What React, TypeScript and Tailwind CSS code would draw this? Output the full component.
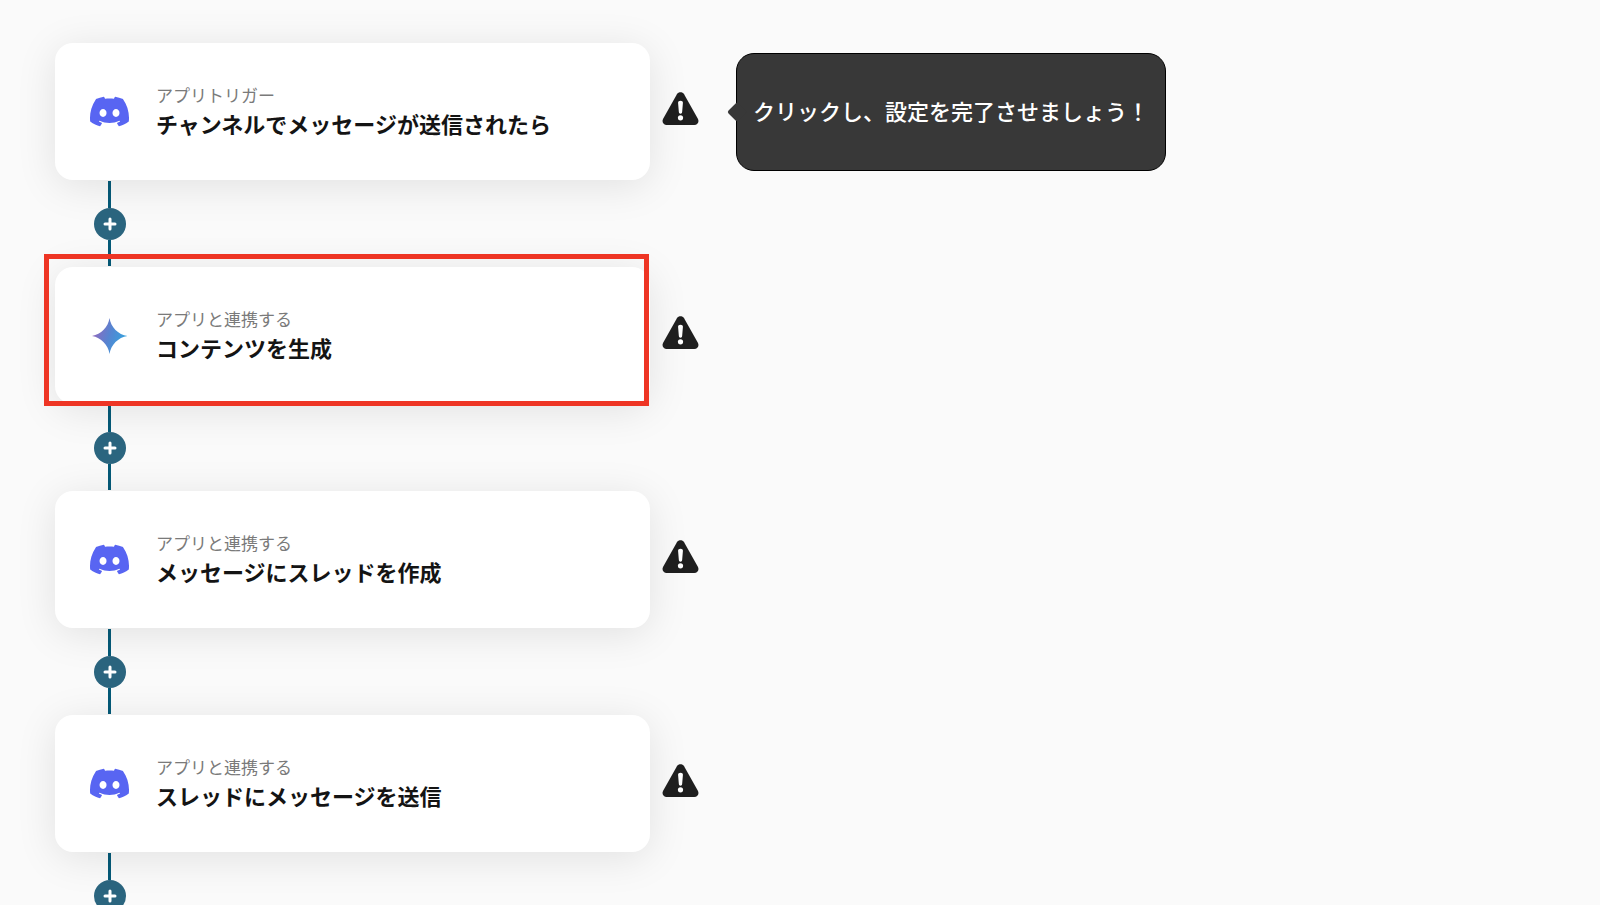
import { Fragment } from "react";
import { SiDiscord } from "react-icons/si";

type Step = {
  app: "discord" | "gemini";
  label: string;
  title: string;
  hint?: string;
  highlighted?: boolean;
};

const steps: Step[] = [
  {
    app: "discord",
    label: "アプリトリガー",
    title: "チャンネルでメッセージが送信されたら",
    hint: "クリックし、設定を完了させましょう！",
  },
  {
    app: "gemini",
    label: "アプリと連携する",
    title: "コンテンツを生成",
    highlighted: true,
  },
  {
    app: "discord",
    label: "アプリと連携する",
    title: "メッセージにスレッドを作成",
  },
  {
    app: "discord",
    label: "アプリと連携する",
    title: "スレッドにメッセージを送信",
  },
];

function GeminiIcon() {
  return (
    <svg viewBox="0 0 36 36" className="size-9" aria-hidden="true">
      <defs>
        <linearGradient id="gemini" x1="0" y1="0.3" x2="1" y2="0.6">
          <stop offset="0.1" stopColor="#8c6cc0" />
          <stop offset="0.5" stopColor="#5684d1" />
          <stop offset="0.9" stopColor="#3a9fdc" />
        </linearGradient>
      </defs>
      <path
        d="M17.5 0C18.8 9.2 26.2 16.6 35.5 18C26.2 19.4 18.8 26.8 17.5 36C16.2 26.8 8.8 19.4 -0.5 18C8.8 16.6 16.2 9.2 17.5 0Z"
        fill="url(#gemini)"
      />
    </svg>
  );
}

function WarningIcon() {
  return (
    <svg
      viewBox="0 0 38 34"
      className="mb-1.5 ml-3 h-[33px] w-[37px] shrink-0"
      role="img"
      aria-label="設定が未完了です"
    >
      <path
        d="M15.3 2.2C17 -0.5 21 -0.5 22.7 2.2L36.9 27.6C38.6 30.8 36.6 34 33.2 34H4.8C1.4 34 -0.6 30.8 1.1 27.6Z"
        fill="#1f1f1f"
      />
      <path
        d="M16.5 11.2C16.4 9.7 17.5 9 19 9S21.6 9.7 21.5 11.2L20.7 20.6C20.6 21.8 20 22.3 19 22.3S17.4 21.8 17.3 20.6Z"
        fill="#fff"
      />
      <circle cx="19" cy="26.6" r="2.7" fill="#fff" />
    </svg>
  );
}

function Tooltip({ text }: { text: string }) {
  return (
    <div role="tooltip" className="relative ml-[37px] shrink-0">
      <p className="rounded-[18px] border border-black bg-[#383838] px-4 pt-10 pb-11 text-[22px] leading-8 font-medium text-white">
        {text}
      </p>
      <span className="absolute top-1/2 -left-[6px] size-[14px] -translate-y-1/2 rotate-45 rounded-[2px] bg-[#383838]" />
    </div>
  );
}

function StepCard({ step }: { step: Step }) {
  return (
    <div className="flex items-center">
      <button
        type="button"
        className="relative flex w-full max-w-[595px] items-center gap-[27px] rounded-[18px] bg-white px-[35px] py-[39px] text-left shadow-[0_6px_40px_rgba(0,0,0,0.1)]"
      >
        <span className="flex w-[39px] shrink-0 justify-center">
          {step.app === "discord" ? (
            <SiDiscord className="size-[39px] text-[#5865f2]" />
          ) : (
            <GeminiIcon />
          )}
        </span>
        <span className="flex flex-col pb-[3px]">
          <span className="text-[17px] leading-[26px] text-[#7a7a7a]">
            {step.label}
          </span>
          <span className="text-[22px] leading-[30px] font-bold text-[#141414]">
            {step.title}
          </span>
        </span>
        {step.highlighted && (
          <span className="pointer-events-none absolute -top-[13px] right-px -bottom-[2px] -left-[11px] border-5 border-[#ee3524]" />
        )}
      </button>
      <WarningIcon />
      {step.hint && <Tooltip text={step.hint} />}
    </div>
  );
}

function Connector() {
  return (
    <div className="ml-[39px] flex w-8 flex-col py-px">
      <span className="ml-[14px] h-[27px] w-[3px] bg-[#055a78]" />
      <button
        type="button"
        aria-label="ステップを追加"
        className="flex size-8 items-center justify-center rounded-full bg-[#2b657f] text-white"
      >
        <svg viewBox="0 0 14 14" className="size-[14px]" aria-hidden="true">
          <path
            d="M7 2V12M2 7H12"
            stroke="currentColor"
            strokeWidth="3"
            strokeLinecap="round"
          />
        </svg>
      </button>
      <span className="ml-[14px] h-[26px] w-[3px] bg-[#055a78]" />
    </div>
  );
}

export default function App() {
  return (
    <main className="h-screen overflow-hidden bg-[#fafafa] pt-[43px] pl-[55px] font-['Noto_Sans_CJK_JP',sans-serif]">
      {steps.map((step) => (
        <Fragment key={step.title}>
          <StepCard step={step} />
          <Connector />
        </Fragment>
      ))}
    </main>
  );
}
